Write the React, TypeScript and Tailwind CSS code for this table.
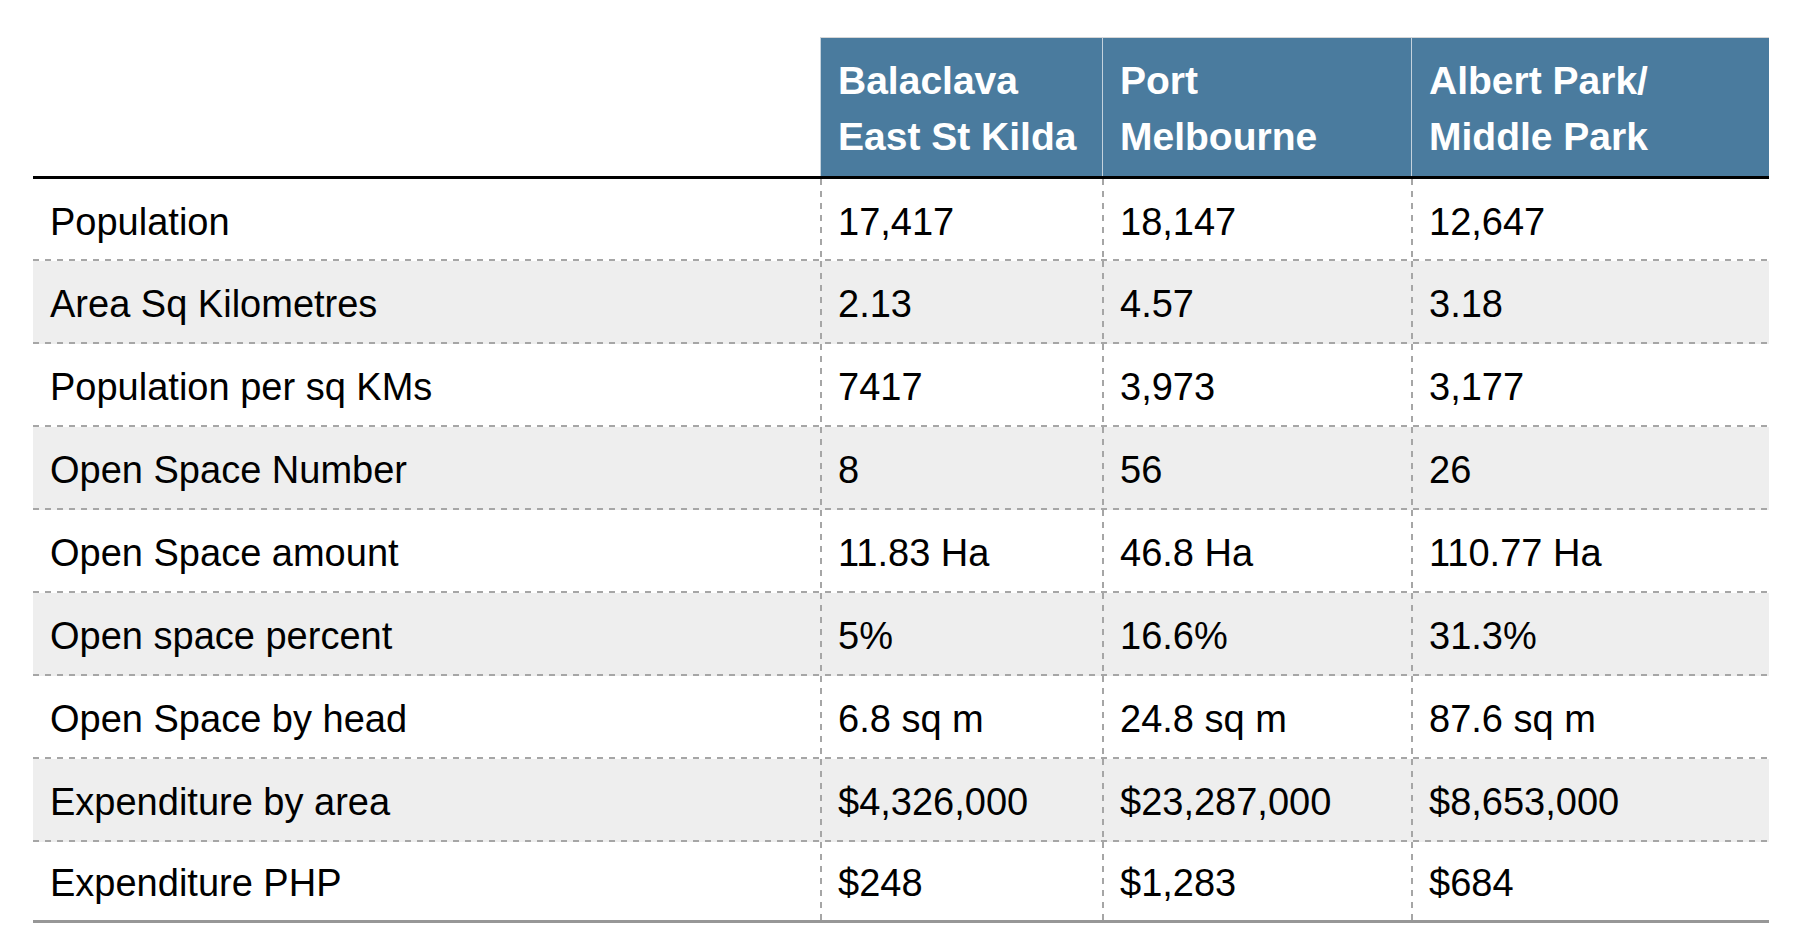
import React from 'react'

const columns = [
  ['Balaclava', 'East St Kilda'],
  ['Port', 'Melbourne'],
  ['Albert Park/', 'Middle Park'],
]

const rows = [
  { label: 'Population', values: ['17,417', '18,147', '12,647'] },
  { label: 'Area Sq Kilometres', values: ['2.13', '4.57', '3.18'] },
  { label: 'Population per sq KMs', values: ['7417', '3,973', '3,177'] },
  { label: 'Open Space Number', values: ['8', '56', '26'] },
  { label: 'Open Space amount', values: ['11.83 Ha', '46.8 Ha', '110.77 Ha'] },
  { label: 'Open space percent', values: ['5%', '16.6%', '31.3%'] },
  { label: 'Open Space by head', values: ['6.8 sq m', '24.8 sq m', '87.6 sq m'] },
  { label: 'Expenditure by area', values: ['$4,326,000', '$23,287,000', '$8,653,000'] },
  { label: 'Expenditure PHP', values: ['$248', '$1,283', '$684'] },
]

const grid = 'grid grid-cols-[787px_282px_309px_358px]'

// dashed rules drawn as repeating gradients (6px dash / 6px gap, like the source)
const rowRule =
  'bg-[image:repeating-linear-gradient(90deg,#a6a6a6_0_6px,transparent_6px_12px)] bg-[length:100%_2px] bg-bottom bg-no-repeat'
const colRule =
  'bg-[image:repeating-linear-gradient(180deg,#a6a6a6_0_6px,transparent_6px_12px)] bg-[length:2px_100%] bg-left bg-no-repeat'

const App = () => {
  return (
    <div className="min-h-screen w-full bg-white pt-[37px] pl-[33px] font-['Liberation_Sans',Arial,sans-serif] text-black">
      <div className="w-[1736px]">
        {/* header */}
        <div className={`${grid} h-[142px] border-b-[3px] border-black`}>
          <div />
          {columns.map((col, i) => (
            <div
              key={i}
              className="border-t border-l border-t-[#d6d6d6] border-l-[#c4d2dd] bg-[#4a7b9e] pl-[17px] pt-[15px] text-[39px] font-bold leading-[56px] text-white"
            >
              <div>{col[0]}</div>
              <div>{col[1]}</div>
            </div>
          ))}
        </div>

        {/* body */}
        {rows.map((row, i) => {
          const last = i === rows.length - 1
          const height = i === 0 ? 'h-[82px]' : last ? 'h-[81px]' : 'h-[83px]'
          const rule = last ? 'border-b-[3px] border-solid border-[#979797]' : rowRule
          return (
            <div
              key={row.label}
              className={`${grid} ${height} ${rule} ${i % 2 === 1 ? 'bg-[#eeeeee]' : 'bg-white'}`}
            >
              <div className="flex items-center pl-[17px] pt-[3px] text-[38px] leading-[44px]">
                {row.label}
              </div>
              {row.values.map((v, j) => (
                <div
                  key={j}
                  className={`flex items-center ${colRule} pl-[18px] pt-[3px] text-[38px] leading-[44px]`}
                >
                  {v}
                </div>
              ))}
            </div>
          )
        })}
      </div>
    </div>
  )
}

export default App
